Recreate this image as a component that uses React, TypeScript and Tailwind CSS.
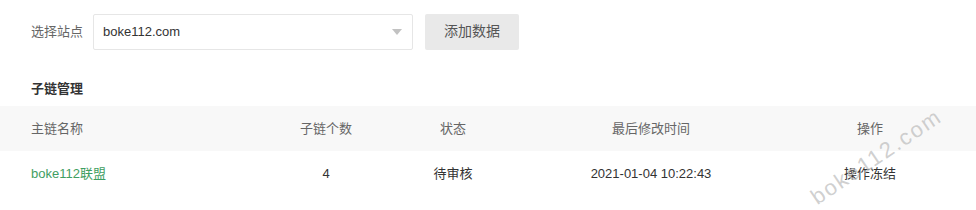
import React from "react";

const cols = "grid grid-cols-[262px_128px_126px_270px_168px_21px]";

const App = () => {
  return (
    <div
      className="relative w-[976px] h-[210px] bg-white overflow-hidden text-[13px] text-[#333]"
      style={{ fontFamily: '"Liberation Sans", "Noto Sans CJK SC", sans-serif' }}
    >
      {/* Site selector */}
      <div className="flex items-center pt-[14px] pl-[31px]">
        <span className="w-[62px] text-[#666]">选择站点</span>
        <div className="flex items-center justify-between w-[320px] h-[36px] border border-[#e6e6e6] rounded-[2px] pl-[9px] pr-[10px] text-[13px] text-[#333]">
          <span>boke112.com</span>
          <span className="w-0 h-0 border-l-[5px] border-r-[5px] border-t-[6px] border-l-transparent border-r-transparent border-t-[#c2c2c2]" />
        </div>
        <button className="ml-[12px] w-[94px] h-[36px] -mt-[1px] bg-[#e9e9e9] text-[#555] text-[14px] rounded-[2px]">
          添加数据
        </button>
      </div>

      {/* Sub-link table */}
      <h3 className="mt-[29px] pl-[31px] text-[13px] font-bold text-[#333] leading-[20px]">子链管理</h3>
      <div className="mt-[7px]">
        <div className={`${cols} h-[45px] items-center bg-[#f8f8f8] text-[#666]`}>
          <div className="pl-[31px]">主链名称</div>
          <div className="text-center">子链个数</div>
          <div className="text-center">状态</div>
          <div className="text-center">最后修改时间</div>
          <div className="text-center">操作</div>
          <div />
        </div>
        <div className={`${cols} h-[45px] items-center text-[#333]`}>
          <div className="pl-[31px] text-[#3f9e62]">boke112联盟</div>
          <div className="text-center">4</div>
          <div className="text-center">待审核</div>
          <div className="text-center">2021-01-04 10:22:43</div>
          <div className="text-center">操作冻结</div>
          <div />
        </div>
      </div>

      {/* Watermark */}
      <div
        className="absolute left-[800px] top-[140px] -rotate-[34deg] text-[22px] tracking-[2px] text-[#bbbbbb]/70 pointer-events-none select-none"
        style={{ fontFamily: '"Liberation Sans", sans-serif' }}
      >
        boke112.com
      </div>
    </div>
  );
};

export default App;
